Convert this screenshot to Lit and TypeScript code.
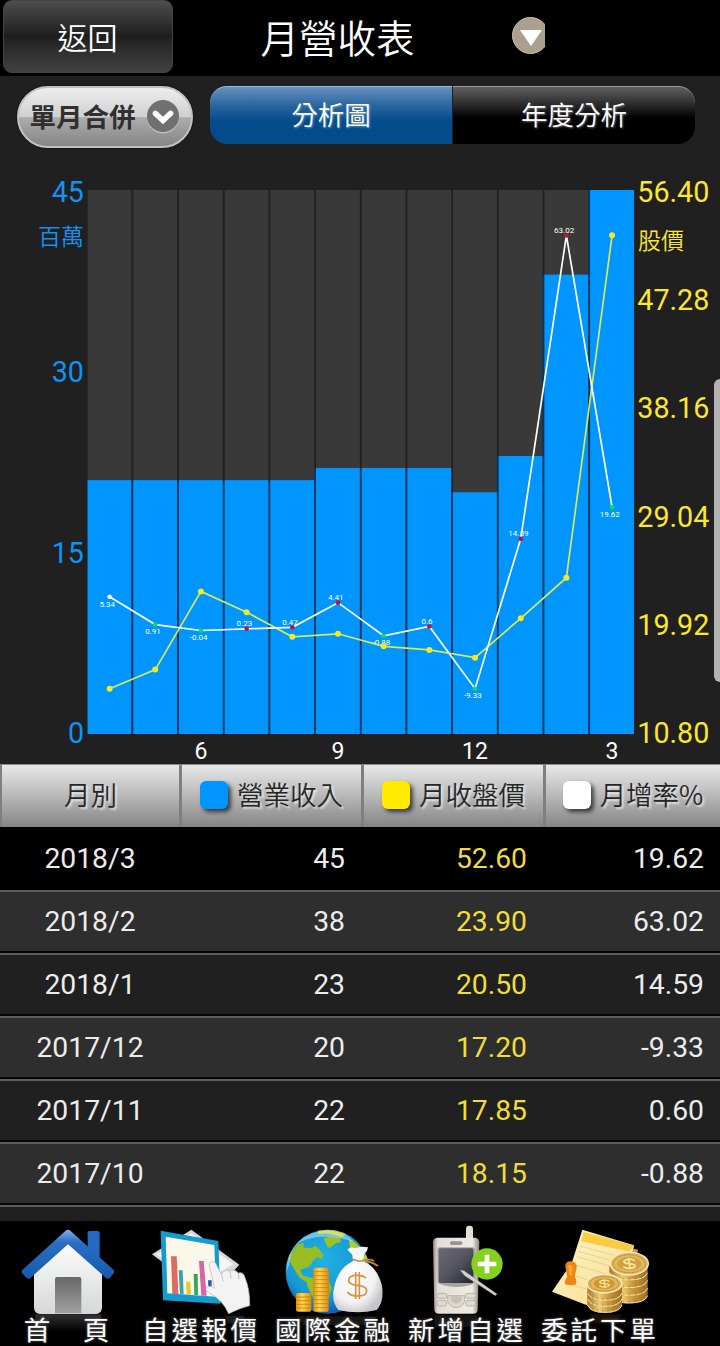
import { LitElement, html, svg, css } from 'lit';
import { customElement, property } from 'lit/decorators.js';
import { classMap } from 'lit/directives/class-map.js';

interface MonthRow {
  month: string;
  revenue: number;
  price: number;
  growth: number;
}

// Oldest first; the table shows the latest six in reverse.
const MONTHS: MonthRow[] = [
  { month: '2017/4', revenue: 21, price: 14.6, growth: 5.34 },
  { month: '2017/5', revenue: 21, price: 16.2, growth: 0.91 },
  { month: '2017/6', revenue: 21, price: 22.75, growth: -0.04 },
  { month: '2017/7', revenue: 21, price: 21.0, growth: 0.23 },
  { month: '2017/8', revenue: 21, price: 18.95, growth: 0.47 },
  { month: '2017/9', revenue: 22, price: 19.2, growth: 4.41 },
  { month: '2017/10', revenue: 22, price: 18.15, growth: -0.88 },
  { month: '2017/11', revenue: 22, price: 17.85, growth: 0.6 },
  { month: '2017/12', revenue: 20, price: 17.2, growth: -9.33 },
  { month: '2018/1', revenue: 23, price: 20.5, growth: 14.59 },
  { month: '2018/2', revenue: 38, price: 23.9, growth: 63.02 },
  { month: '2018/3', revenue: 45, price: 52.6, growth: 19.62 },
];

const TOP = 38;
const BOTTOM = 582;
const PITCH = 45.68;

/** Revenue bars with the price and growth lines on top. */
@customElement('revenue-chart')
export class RevenueChart extends LitElement {
  static styles = css`
    :host { display: block; }
    svg { display: block; font-family: Roboto, "Noto Sans CJK TC", sans-serif; }
    .slot { fill: #393939; }
    .bar { fill: #0095ff; }
    .edge { fill: #003a66; }
    .left { fill: #0f93f5; font-size: 28.7px; text-anchor: end; }
    .right { fill: #fbe72c; font-size: 28.7px; }
    .unit { font-size: 23px; font-weight: 350; }
    .tick { fill: #fff; font-size: 23px; text-anchor: middle; }
    .value { fill: #fff; font-size: 8px; text-anchor: middle; }
    .price { fill: none; stroke: #d5ea50; stroke-width: 1.7; }
    .price-dot { fill: #f5ea1e; }
    .growth { fill: none; stroke: #fff; stroke-width: 1.7; }
    .up { fill: #c8102e; }
    .down { fill: #00e05a; }
    .first { fill: #fff; }
  `;

  @property({ type: Array }) rows: MonthRow[] = [];

  private x(i: number) {
    return 109.6 + i * PITCH;
  }

  private priceY(v: number) {
    return BOTTOM - ((v - 10.8) / 45.6) * (BOTTOM - TOP);
  }

  private growthY(v: number) {
    return 536.7 - (v + 9.33) * 6.264;
  }

  render() {
    const rows = this.rows;
    const line = (y: (r: MonthRow) => number) => rows.map((r, i) => `${this.x(i)},${y(r)}`).join(' ');
    const up = (i: number) => i > 0 && rows[i].growth > rows[i - 1].growth;

    return html`
      <svg width="720" height="612" viewBox="0 0 720 612">
        ${rows.map((r, i) => {
          const x = 87.6 + i * PITCH;
          const h = (r.revenue / 45) * (BOTTOM - TOP);
          return svg`
            <rect class="slot" x=${x} y=${TOP} width="43.9" height=${BOTTOM - TOP} />
            ${i ? svg`<rect class="edge" x=${x - 1.8} y=${BOTTOM - h} width="1.8" height=${h} />` : ''}
            <rect class="bar" x=${x} y=${BOTTOM - h} width="43.9" height=${h} />`;
        })}

        <text class="left" x="84" y="49.5">45</text>
        <text class="left unit" x="84" y="92.5">百萬</text>
        <text class="left" x="84" y="230">30</text>
        <text class="left" x="84" y="411">15</text>
        <text class="left" x="84" y="591">0</text>

        ${['56.40', '47.28', '38.16', '29.04', '19.92', '10.80'].map(
          (t, i) => svg`<text class="right" x="637.3" y=${49.7 + i * 108.3}>${t}</text>`
        )}
        <text class="right unit" x="638" y="96.5">股價</text>

        ${rows.map((r, i) => i % 3 === 2
          ? svg`<text class="tick" x=${this.x(i)} y="607">${r.month.split('/')[1]}</text>`
          : '')}

        ${rows.map((r, i) => svg`
          <text class="value" x=${this.x(i) - 2.3} y=${this.growthY(r.growth) + (up(i) ? -2.6 : 9.7)}>${r.growth}</text>`)}

        <polyline class="price" points=${line((r) => this.priceY(r.price))} />
        ${rows.map((r, i) => svg`<circle class="price-dot" cx=${this.x(i)} cy=${this.priceY(r.price)} r="3" />`)}

        <polyline class="growth" points=${line((r) => this.growthY(r.growth))} />
        ${rows.map((r, i) => svg`
          <circle class=${i === 0 ? 'first' : up(i) ? 'up' : 'down'}
            cx=${this.x(i)} cy=${this.growthY(r.growth)} r="2.3" />`)}
      </svg>
    `;
  }
}

const homeIcon = html`
  <svg viewBox="0 18 399 285">
    <defs>
      <linearGradient id="wall" x1="0" y1="0" x2="0" y2="1"><stop offset="0" stop-color="#fff" /><stop offset="1" stop-color="#d6d8d8" /></linearGradient>
      <linearGradient id="roof" x1="0" y1="0" x2="0" y2="1"><stop offset="0" stop-color="#7db0e8" /><stop offset=".25" stop-color="#2b6fc4" /><stop offset="1" stop-color="#1659b0" /></linearGradient>
      <linearGradient id="door" x1="0" y1="0" x2="0" y2="1"><stop offset="0" stop-color="#686868" /><stop offset="1" stop-color="#a0a0a0" /></linearGradient>
      <linearGradient id="glow" x1="0" y1="0" x2="0" y2="1"><stop offset="0" stop-color="#303030" /><stop offset="1" stop-color="#000" /></linearGradient>
    </defs>
    <path d="M106 298H304V350H106Z" fill="url(#glow)" />
    <path d="M263 52Q263 48 270 48H292Q299 48 299 54V130H263Z" fill="#2369c2" />
    <path d="M102 160L204 72L306 160V278Q304 297 284 297H124Q103 297 102 278Z" fill="url(#wall)" />
    <path d="M165 295V192Q165 186 172 186H237Q244 186 244 192V295Z" fill="url(#door)" />
    <path d="M196 48Q204 41 212 48L341 165Q345 170 341 175L330 188Q324 194 317 188L204 88L92 188Q85 194 79 188L67 175Q63 170 67 165Z" fill="url(#roof)" />
  </svg>`;

const quoteIcon = html`
  <svg viewBox="399 18 399 285">
    <path d="M675 303L735 303L725 325H685Z" fill="#1c1c1c" />
    <path d="M456 118L574 44L718 149L690 180L600 225Z" fill="#d5d7da" />
    <path d="M468 118L574 55L700 148L600 205Z" fill="#f5f5f6" />
    <path d="M482 47L655 78L662 266L489 256Z" fill="#129ccf" />
    <path d="M497 65L643 90L648 245L502 235Z" fill="#fbf8ea" />
    <path d="M513 124H530L535 237H517Z" fill="#df6b60" />
    <path d="M536 166H548L551 238H540Z" fill="#36a6ad" />
    <path d="M558 200H571L573 239H560Z" fill="#e5ca34" />
    <path d="M581 177H593L594 240H583Z" fill="#35a65b" />
    <path d="M597 138H611L620 242H604Z" fill="#d766a6" />
    <path d="M624 196H635V215H625Z" fill="#2d5ab0" />
    <path d="M627 148Q632 134 646 143L664 178Q676 160 690 169Q704 160 715 174Q730 169 735 188Q750 224 749 272Q722 278 686 296Q668 254 626 233Q613 223 621 215Q630 211 644 220Z" fill="#f3f3f4" stroke="#b8b8bc" stroke-width="2" />
    <path d="M664 178L670 199M690 169L693 190M715 174L717 193" fill="none" stroke="#c2c2c5" stroke-width="3" />
  </svg>`;

const globeIcon = html`
  <svg viewBox="18 18 399 285">
    <defs>
      <radialGradient id="sea" cx=".45" cy=".35" r=".65"><stop offset="0" stop-color="#1fb2e2" /><stop offset=".7" stop-color="#1798d4" /><stop offset="1" stop-color="#105fb0" /></radialGradient>
      <linearGradient id="gold" x1="0" x2="1"><stop offset="0" stop-color="#e8930c" /><stop offset=".4" stop-color="#fcd650" /><stop offset="1" stop-color="#e18a09" /></linearGradient>
      <radialGradient id="bag" cx=".4" cy=".4" r=".65"><stop offset="0" stop-color="#fff" /><stop offset=".7" stop-color="#f1f1f1" /><stop offset="1" stop-color="#c5c5c9" /></radialGradient>
      <clipPath id="ball"><circle cx="203" cy="170" r="126" /></clipPath>
    </defs>
    <path d="M107 304H350L330 330H130Z" fill="#191713" />
    <circle cx="203" cy="170" r="126" fill="url(#sea)" />
    <g clip-path="url(#ball)">
      <path d="M85 130L113 88L132 83L130 98L156 99L165 92L178 103L190 119L186 132L172 126L158 139L150 153L136 160L121 164L127 180L146 187L160 190V250L143 217L140 202L119 188L108 171L97 154Z" fill="#98bd25" />
      <path d="M190 70L214 64L240 68L243 82L227 85L210 98L202 95Z" fill="#9dc025" />
      <path d="M172 46Q206 36 258 56L246 67Q204 51 174 57ZM267 72Q294 83 326 132L306 147L285 134L270 105Z" fill="#b7cb25" />
      <path d="M204 190L216 220L205 250Z" fill="#8cb225" />
      <path d="M78 170Q85 56 203 46Q257 50 282 80Q180 49 119 82Q90 105 88 150Z" fill="#fff" opacity=".38" />
    </g>
    <rect x="108" y="234" width="46" height="56" rx="6" fill="url(#gold)" />
    <rect x="160" y="158" width="46" height="132" rx="6" fill="url(#gold)" />
    <path d="M108 246H154M108 257H154M108 268H154M108 279H154M160 170H206M160 182H206M160 194H206M160 206H206M160 218H206M160 230H206M160 242H206M160 254H206M160 266H206M160 278H206" stroke="#bd7408" stroke-width="2" />
    <path d="M262 104Q272 94 287 100Q302 93 324 97Q324 107 313 117L309 139Q351 154 366 212Q373 260 350 285Q293 299 235 285Q215 263 221 224Q232 160 279 139L277 119Z" fill="url(#bag)" />
    <path d="M278 133Q297 142 314 135M307 137Q334 129 342 139M312 137Q332 139 354 153" fill="none" stroke="#c48b3e" stroke-width="5" />
    <path d="M318 190Q312 181 292 181Q266 181 266 196Q266 209 292 211Q320 213 320 227Q320 243 293 243Q270 243 263 231M287 171V252M298 171V252" fill="none" stroke="#d6943c" stroke-width="5" />
  </svg>`;

const phoneIcon = html`
  <svg viewBox="417 18 399 285">
    <defs>
      <linearGradient id="case" x1="0" x2="1"><stop offset="0" stop-color="#8f8781" /><stop offset=".1" stop-color="#e3ded6" /><stop offset=".85" stop-color="#eeebe3" /><stop offset="1" stop-color="#8b837b" /></linearGradient>
      <linearGradient id="screen" x1="0" y1="0" x2="1" y2="1"><stop offset="0" stop-color="#6b6b76" /><stop offset=".5" stop-color="#555561" /><stop offset="1" stop-color="#23232d" /></linearGradient>
    </defs>
    <path d="M523 299H652V335H523Z" fill="#161514" />
    <rect x="618" y="32" width="21" height="60" rx="10" fill="#e2dfd5" />
    <path d="M519 82Q519 68 534 68H643Q658 68 658 82L653 284Q652 296 640 296H536Q524 296 523 284Z" fill="url(#case)" />
    <rect x="570" y="79" width="37" height="11" rx="5" fill="#99938c" />
    <path d="M532 101Q534 97 540 97H638Q645 97 645 103V203Q634 213 590 216Q546 213 533 203Z" fill="#aaa39b" />
    <rect x="536" y="100" width="104" height="104" rx="5" fill="url(#screen)" />
    <g fill="#dedad1" stroke="#a79e96" stroke-width="2">
      <rect x="531" y="235" width="29" height="15" rx="6" />
      <rect x="531" y="256" width="29" height="17" rx="7" />
      <rect x="617" y="235" width="30" height="15" rx="6" />
      <rect x="617" y="256" width="30" height="17" rx="7" />
      <path d="M563 242H614V258Q608 277 588 278Q569 276 563 258Z" />
    </g>
    <path d="M572 244H605V254Q600 265 588 266Q577 264 572 254Z" fill="#c8c1b9" />
    <circle cx="681" cy="147" r="47" fill="#84d21c" />
    <path d="M674 119H688V140H709V154H688V175H674V154H653V140H674Z" fill="#fff" />
    <path d="M600 165L612 167L711 237L706 242L614 182Z" fill="#d6d2ca" stroke="#8a857e" stroke-width="1" />
  </svg>`;

const orderIcon = html`
  <svg viewBox="96 18 399 285">
    <defs>
      <linearGradient id="coin" x1="0" x2="1"><stop offset="0" stop-color="#a7752a" /><stop offset=".35" stop-color="#edcd71" /><stop offset=".6" stop-color="#c99a40" /><stop offset="1" stop-color="#9f6d20" /></linearGradient>
      <linearGradient id="paper" x1="0" y1="0" x2="1" y2="1"><stop offset="0" stop-color="#fff6c9" /><stop offset="1" stop-color="#f7da8a" /></linearGradient>
    </defs>
    <path d="M270 298H365L350 325H285Z" fill="#171309" />
    <path d="M247 44L402 91L380 240L265 272L156 230L216 142Z" fill="url(#paper)" />
    <path d="M251 51L399 91L390 110L244 79Z" fill="#fbcb42" />
    <path d="M401 101L414 104L411 118L397 112Z" fill="#e58c45" />
    <path d="M239 93L367 128M235 109L342 139M231 125L329 153M215 147L319 177M207 176L260 194M202 205L258 222" stroke="#d6c68c" stroke-width="2" />
    <path d="M196 155Q196 139 212 139Q230 140 230 156L224 187Q231 190 228 208Q212 214 195 207Q194 192 202 187Z" fill="#ed8414" />
    <path d="M205 153Q212 145 218 155L215 181H209Z" fill="#ffa83a" />
    ${[222, 199, 176, 153].map((y) => svg`
      <path d="M328 ${y}V${y + 19}Q336 ${y + 43} 386 ${y + 43}Q438 ${y + 43} 443 ${y + 19}V${y}Z" fill="url(#coin)" />
      <path d="M329 ${y + 20}Q338 ${y + 42} 386 ${y + 42}Q435 ${y + 42} 443 ${y + 20}" fill="none" stroke="#f6e2a0" stroke-width="3" />
      <path d="M340 ${y + 27}v12M352 ${y + 31}v12M370 ${y + 34}v10M388 ${y + 35}v10M407 ${y + 33}v11M425 ${y + 28}v11" stroke="#8d621f" stroke-width="2" opacity=".5" />`)}
    <ellipse cx="388" cy="146" rx="57" ry="34" fill="#dfb75d" stroke="#f9ebb8" stroke-width="4" />
    <ellipse cx="388" cy="146" rx="48" ry="27" fill="none" stroke="#9d732d" stroke-width="3" stroke-dasharray="3 3" />
    <ellipse cx="388" cy="146" rx="36" ry="20" fill="#d2a041" />
    <path d="M405 137Q388 128 373 137Q368 145 387 146Q410 148 404 156Q388 165 370 155M385 129L391 163" fill="none" stroke="#fae49c" stroke-width="5" />
    ${[256, 238, 220].map((y) => svg`
      <path d="M262 ${y - 5}V${y + 15}Q270 ${y + 38} 315 ${y + 38}Q360 ${y + 38} 366 ${y + 15}V${y - 5}Z" fill="url(#coin)" />
      <path d="M263 ${y + 14}Q272 ${y + 36} 315 ${y + 36}Q358 ${y + 36} 366 ${y + 14}" fill="none" stroke="#f6e2a0" stroke-width="3" />
      <path d="M278 ${y + 22}v12M292 ${y + 26}v10M308 ${y + 27}v10M324 ${y + 27}v10M341 ${y + 23}v12" stroke="#8d621f" stroke-width="2" opacity=".5" />`)}
    <ellipse cx="313" cy="206" rx="52" ry="28" fill="#dfb75d" stroke="#f9ebb8" stroke-width="4" />
    <ellipse cx="313" cy="206" rx="43" ry="22" fill="none" stroke="#9d732d" stroke-width="3" stroke-dasharray="3 3" />
    <ellipse cx="313" cy="206" rx="32" ry="16" fill="#d2962e" />
    <path d="M328 199Q313 192 300 199Q296 205 313 206Q332 207 327 213Q313 220 298 212M311 193L316 219" fill="none" stroke="#fae49c" stroke-width="4" />
  </svg>`;

const NAV = [
  { label: '首　頁', icon: homeIcon },
  { label: '自選報價', icon: quoteIcon },
  { label: '國際金融', icon: globeIcon },
  { label: '新增自選', icon: phoneIcon },
  { label: '委託下單', icon: orderIcon },
];

@customElement('app-root')
export class AppRoot extends LitElement {
  static styles = css`
    :host {
      display: flex;
      flex-direction: column;
      position: relative;
      width: 720px;
      height: 1346px;
      overflow: hidden;
      background: #202020;
      color: #fff;
      font-family: Roboto, "Noto Sans CJK TC", sans-serif;
    }

    * { box-sizing: border-box; }

    header, .tab, .thead {
      font-family: "Noto Sans CJK TC", sans-serif;
      font-weight: 350;
    }

    header {
      display: grid;
      grid-template-columns: 173px 329px 1fr;
      flex: none;
      height: 76px;
      background: #000;
    }

    .back {
      height: 73px;
      margin-left: 3px;
      padding-right: 1px;
      border: 1px solid #454545;
      border-radius: 9px;
      background: linear-gradient(#4d4d4d, #2c2c2c 35%, #1e1e1e 50%, #2b2b2b 65%, #414141);
      font-size: 30px;
      line-height: 70px;
      text-align: center;
    }

    .title {
      font-size: 38.5px;
      line-height: 72px;
      text-align: center;
    }

    .more { display: block; margin: 17px 0 0 10px; }

    .toolbar {
      display: flex;
      flex: none;
      height: 76px;
      padding: 10px 0 0 17px;
    }

    .picker {
      display: flex;
      align-items: center;
      gap: 11px;
      width: 176px;
      height: 62px;
      padding-left: 10.5px;
      border: 2px solid #c2c2c2;
      border-radius: 31px;
      background: linear-gradient(#ededed, #d0d0d0 50%, #adadad 51%, #858585);
      box-shadow: 0 0 2px #000;
      color: #303030;
      font-size: 26.5px;
      font-weight: 700;
    }

    .picker span { margin-top: -4px; }

    .tabs { display: flex; margin-left: 17px; }

    .tab {
      width: 242px;
      height: 58px;
      border-top: 1px solid #9a9a9a;
      border-radius: 0 17px 17px 0;
      background: linear-gradient(#606060, #303030 28%, #000 55%);
      font-size: 26.5px;
      line-height: 54px;
      text-align: center;
      text-shadow: 1px 1px 2px rgba(255, 255, 255, 0.4);
    }

    .tab.active {
      margin-right: 1px;
      border-top-color: #9dbad6;
      border-radius: 17px 0 0 17px;
      background: linear-gradient(#6692bd, #2a66a0 32%, #044b8b 60%);
    }

    .thead, .row { display: grid; flex: none; }

    .thead {
      grid-template-columns: 179px 182px 182px 1fr;
      height: 63px;
      border-top: 1px solid #888;
      background: linear-gradient(#e8e8e8, #b8b8b8 50%, #858585);
      color: #262626;
      font-size: 26.5px;
    }

    .th {
      display: flex;
      align-items: center;
      justify-content: center;
      gap: 9px;
      border-left: 3px solid #7f7f7f;
      text-shadow: 2px 2px 2px rgba(255, 255, 255, 0.65);
      white-space: nowrap;
    }

    .th:first-child { border-left-width: 2px; }
    .th span { margin-top: -5px; }

    .swatch {
      width: 28px;
      height: 28px;
      margin-top: -3px;
      border-radius: 6px;
      box-shadow: 3px 3px 4px rgba(0, 0, 0, 0.65);
    }

    .swatch.revenue { background: #0095ff; }
    .swatch.price { background: #ffea00; }
    .swatch.growth { background: #fff; }

    .row {
      grid-template-columns: 180px 165px 182px 177px;
      height: 63px;
      border-top: 2px solid #5c5c5c;
      border-bottom: 2px solid #060606;
      background: #202020;
      color: #ececec;
      font-size: 28.3px;
      line-height: 60px;
      text-align: right;
    }

    .row.alt { background: #2e2e2e; }
    .row.current { border-color: #000; background: #000; }
    .row .month { text-align: center; }
    .row .price { color: #f0de37; }

    .rest { flex: none; height: 16px; border-top: 2px solid #5c5c5c; }

    nav {
      display: grid;
      grid-template-columns: repeat(5, 133px);
      flex: 1;
      background: #000;
    }

    .item { text-align: center; }
    .item svg { display: block; width: 133px; height: 95px; overflow: visible; }

    .item div {
      position: relative;
      height: 30px;
      font-size: 26.5px;
      line-height: 30px;
      letter-spacing: 3px;
      text-indent: 3px;
      text-shadow: 0 0 3px rgba(255, 255, 255, 0.45);
      white-space: nowrap;
    }

    .scrollbar {
      position: absolute;
      top: 379px;
      right: 0;
      width: 6px;
      height: 303px;
      border-radius: 6px 0 0 6px;
      background: #b2b2b2;
    }
  `;

  render() {
    const latest = MONTHS.slice(-6).reverse();

    return html`
      <header>
        <div class="back">返回</div>
        <div class="title">月營收表</div>
        <svg class="more" width="33" height="37" viewBox="0 0 33 37">
          <circle cx="18.5" cy="18.5" r="18" fill="#aaa08d" stroke="#c7bead" />
          <path d="M8 13H30L19 29Z" fill="#fff" />
        </svg>
      </header>

      <div class="toolbar">
        <div class="picker">
          <span>單月合併</span>
          <svg width="32" height="34" viewBox="0 0 32 34">
            <circle cx="16" cy="17.5" r="16" fill="#bdbdbd" />
            <circle cx="16" cy="16" r="16" fill="#707070" />
            <path d="M8.5 13.5L16 20.5L23.5 13.5" fill="none" stroke="#fff" stroke-width="5.6" stroke-linecap="round" />
          </svg>
        </div>
        <div class="tabs">
          <div class="tab active">分析圖</div>
          <div class="tab">年度分析</div>
        </div>
      </div>

      <revenue-chart .rows=${MONTHS}></revenue-chart>

      <div class="thead">
        <div class="th"><span>月別</span></div>
        <div class="th"><i class="swatch revenue"></i><span>營業收入</span></div>
        <div class="th"><i class="swatch price"></i><span>月收盤價</span></div>
        <div class="th"><i class="swatch growth"></i><span>月增率%</span></div>
      </div>

      ${latest.map((r, i) => html`
        <div class=${classMap({ row: true, alt: i % 2 === 1, current: i === 0 })}>
          <div class="month">${r.month}</div>
          <div>${r.revenue}</div>
          <div class="price">${r.price.toFixed(2)}</div>
          <div>${r.growth.toFixed(2)}</div>
        </div>
      `)}
      <div class="rest"></div>

      <nav>
        ${NAV.map((n) => html`<div class="item">${n.icon}<div>${n.label}</div></div>`)}
      </nav>

      <div class="scrollbar"></div>
    `;
  }
}

declare global {
  interface HTMLElementTagNameMap {
    'app-root': AppRoot;
    'revenue-chart': RevenueChart;
  }
}
